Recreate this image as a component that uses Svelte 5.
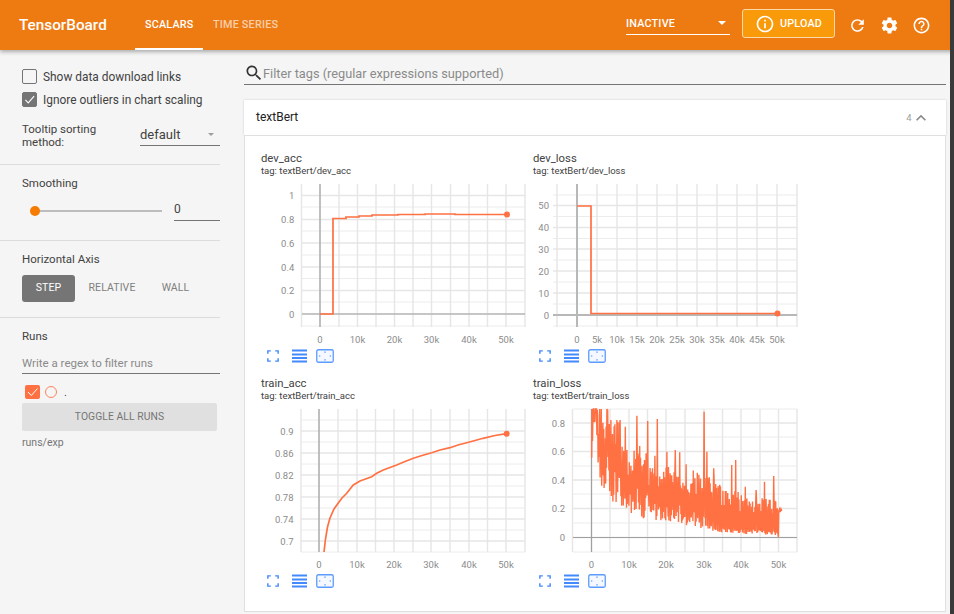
<script>
  function seeded(seed) {
    let s = seed;
    return () => {
      s = (s * 16807) % 2147483647;
      return (s - 1) / 2147483646;
    };
  }

  function interp(table, x) {
    for (let i = 1; i < table.length; i++) {
      if (x <= table[i][0]) {
        const [a, av] = table[i - 1];
        const [b, bv] = table[i];
        return av + ((bv - av) * (x - a)) / (b - a);
      }
    }
    return table[table.length - 1][1];
  }

  function trainLossPath() {
    const r = seeded(4242);
    const x0 = 66.7;
    const step5k = 18.65;
    const upper = [[0, 0.9], [1, 0.78], [2, 0.6], [4, 0.46], [6, 0.4], [7, 0.33], [8, 0.27], [10, 0.22]];
    const lower = [[0, 0.62], [0.5, 0.36], [1, 0.28], [2, 0.2], [4, 0.14], [6, 0.08], [7, 0.04], [10, 0.02]];
    const spikes = [[205, 100], [213, 100], [228, 100], [246, 105], [275, 135], [285, 135], [300, 155], [335, 122], [368, 138], [396, 132], [425, 230], [450, 225], [463, 232], [483, 268], [537, 110], [545, 230], [566, 280], [620, 270], [632, 255], [660, 335], [693, 345], [718, 320], [745, 303]]
      .map(([zx, zy]) => [zx / 3, zy / 3 - 34]);
    const pts = [];
    let next = 0;
    let high = true;
    for (let x = x0; x <= 253; x += 0.4) {
      const t = (x - x0) / step5k;
      const u = interp(upper, t);
      const l = interp(lower, t);
      let v;
      if (high) {
        v = u * (0.6 + 0.55 * r());
      } else {
        v = l * (0.75 + 1.15 * r());
      }
      high = !high;
      let y = 128.3 - v * 143;
      if (next < spikes.length && x >= spikes[next][0]) {
        y = spikes[next][1];
        next++;
      }
      pts.push([x, Math.max(0, Math.min(128.3, y))]);
    }
    pts.push([253.4, 128], [253.8, 102], [254.6, 100], [255.2, 103], [256, 100], [256.7, 102]);
    return 'M' + pts.map((p) => p[0].toFixed(1) + ',' + p[1].toFixed(1)).join('L');
  }

  const charts = [
    {
      name: 'dev_acc', cls: 'c1', dx: 0, labelRight: 44.3,
      yTicks: [[195.5,'1'],[219.5,'0.8'],[243,'0.6'],[267,'0.4'],[290.5,'0.2'],[314,'0']].map(([y,l]) => [y - 184, l]),
      ySub: [207,231,255,278.5,302,326].map((y) => y - 184),
      xTicks: [[70,'0'],[107.5,'10k'],[144.5,'20k'],[181.5,'30k'],[219,'40k'],[256,'50k']],
      xSub: [51.5,89,126,163,200.5,237.5,275],
      axisX: 70, axisY: 130,
      plotL: 52, plotR: 275,
      lines: 'M70,130H83V34.5H96V33H109V32H122V31H148V30.5H175V30H205V30.5H256',
      dot: [257, 30.5], h: 143
    },
    {
      name: 'dev_loss', cls: 'c2', dx: 3, labelRight: 24,
      yTicks: [[205.5,'50'],[227.5,'40'],[249,'30'],[271,'20'],[293,'10'],[315,'0']].map(([y,l]) => [y - 184, l]),
      ySub: [195,216.5,238.5,260,282,304,326].map((y) => y - 184),
      xTicks: [[52,'0'],[72,'5k'],[92,'10k'],[112,'15k'],[132,'20k'],[152,'25k'],[172,'30k'],[192,'35k'],[212,'40k'],[232,'45k'],[252,'50k']],
      xSub: [32, 272],
      axisX: 52, axisY: 131,
      plotL: 28, plotR: 272,
      lines: 'M52,22H66V129.500H252',
      dot: [252.5, 129.5], h: 143
    },
    {
      name: 'train_acc', cls: 'c3', dx: 0, labelRight: 43.5,
      yTicks: [[431,'0.9'],[453,'0.86'],[475,'0.82'],[497,'0.78'],[519,'0.74'],[541,'0.7']].map(([y,l]) => [y - 409, l]),
      ySub: [420,442,464,486,508,530,552].map((y) => y - 409),
      xTicks: [[69,'0'],[107,'10k'],[144,'20k'],[181,'30k'],[219,'40k'],[256,'50k']],
      xSub: [51,88,125.5,163,200,237.5,275],
      axisX: 69, axisY: -10,
      plotL: 51, plotR: 275,
      lines: 'M74,143L75.5,130L77.5,118L80,109L84,100L88.3,94L92,89L96.7,84.3L103.3,76L110,72L121.7,67.7L126.7,64.3L133.3,61L146.7,56L155,52.5L163.3,49.3L172,46.5L181.7,43.7L190,41L200,38.7L208,36L216.7,33.7L225,31.5L233,29.3L245,26.5L256.7,24.7',
      dot: [256.7, 24.7], h: 143
    },
    {
      name: 'train_loss', cls: 'c4', dx: 3, labelRight: 40,
      yTicks: [[423,'0.8'],[451.5,'0.6'],[480,'0.4'],[508.5,'0.2'],[537.5,'0']].map(([y,l]) => [y - 409, l]),
      ySub: [409,437,466,494,523,552].map((y) => y - 409),
      xTicks: [[66.5,'0'],[104,'10k'],[141,'20k'],[179,'30k'],[216,'40k'],[253.5,'50k']],
      xSub: [47.5,85,122.5,160,197.5,235,272],
      axisX: 66.5, axisY: 128.5,
      plotL: 48, plotR: 272,
      lines: trainLossPath(),
      dot: null, h: 143
    }
  ];
</script>

<div class="page">
  <header class="toolbar">
    <div class="brand">TensorBoard</div>
    <nav class="tabs">
      <div class="tab active">SCALARS</div>
      <div class="tab">TIME SERIES</div>
    </nav>
    <div class="spacer"></div>
    <div class="inactive">
      <span>INACTIVE</span>
      <i class="caret white"></i>
    </div>
    <button class="upload">
      <svg width="20" height="20" viewBox="0 0 24 24"><path fill="#fff" d="M11 17h2v-6h-2v6zm1-15C6.48 2 2 6.48 2 12s4.48 10 10 10 10-4.48 10-10S17.520 2 12 2zm0 18c-4.410 0-8-3.590-8-8s3.590-8 8-8 8 3.590 8 8-3.590 8-8 8zM11 9h2V7h-2v2z"/></svg>
      <span>UPLOAD</span>
    </button>
    <div class="actions">
      <svg width="19" height="19" viewBox="0 0 24 24"><path fill="#fff" d="M17.650 6.350C16.200 4.900 14.210 4 12 4c-4.420 0-7.990 3.580-7.990 8s3.570 8 7.990 8c3.730 0 6.840-2.550 7.730-6h-2.080c-.82 2.330-3.040 4-5.650 4-3.310 0-6-2.690-6-6s2.690-6 6-6c1.660 0 3.140.69 4.220 1.780L13 11h7V4l-2.350 2.350z"/></svg>
      <svg width="19" height="19" viewBox="0 0 24 24"><path fill="#fff" d="M19.430 12.980c.04-.32.07-.64.07-.98s-.03-.66-.07-.98l2.110-1.650c.19-.15.24-.42.12-.64l-2-3.460c-.12-.22-.39-.3-.61-.22l-2.490 1c-.52-.4-1.080-.73-1.690-.98l-.38-2.650C14.460 2.180 14.250 2 14 2h-4c-.25 0-.46.18-.49.420l-.38 2.650c-.61.25-1.170.59-1.690.98l-2.490-1c-.23-.09-.49 0-.61.22l-2 3.460c-.13.22-.07.49.12.64l2.110 1.650c-.04.32-.07.65-.07.98s.03.66.07.98l-2.110 1.650c-.19.15-.24.42-.12.64l2 3.460c.12.22.39.3.61.22l2.490-1c.52.4 1.080.73 1.690.98l.38 2.650c.03.24.24.42.49.42h4c.25 0 .46-.18.49-.42l.38-2.650c.61-.25 1.170-.59 1.690-.98l2.490 1c.23.09.49 0 .61-.22l2-3.460c.12-.22.07-.49-.12-.64l-2.110-1.650zM12 15.500c-1.930 0-3.500-1.570-3.500-3.500s1.570-3.500 3.500-3.500 3.500 1.570 3.500 3.500-1.570 3.500-3.500 3.500z"/></svg>
      <svg width="19" height="19" viewBox="0 0 24 24"><path fill="#fff" d="M11 18h2v-2h-2v2zm1-16C6.480 2 2 6.480 2 12s4.480 10 10 10 10-4.480 10-10S17.520 2 12 2zm0 18c-4.410 0-8-3.590-8-8s3.590-8 8-8 8 3.590 8 8-3.590 8-8 8zm0-14c-2.210 0-4 1.790-4 4h2c0-1.100.9-2 2-2s2 .9 2 2c0 2-3 1.750-3 5h2c0-2.250 3-2.500 3-5 0-2.210-1.790-4-4-4z"/></svg>
    </div>
  </header>

  <div class="body">
    <aside class="side">
      <section class="opts">
        <label class="check"><span class="box"></span>Show data download links</label>
        <label class="check"><span class="box on"><svg width="15" height="15" viewBox="0 0 18 18"><path d="M4 9.500L7.500 13L14.500 5" fill="none" stroke="#fff" stroke-width="1.300"/></svg></span>Ignore outliers in chart scaling</label>
        <div class="sort">
          <div class="sort-label">Tooltip sorting method:</div>
          <div class="sort-select"><span>default</span><i class="caret grey"></i></div>
        </div>
      </section>
      <section class="smooth">
        <div class="title">Smoothing</div>
        <div class="slider-row">
          <div class="track"><span class="knob"></span></div>
          <div class="num">0</div>
        </div>
      </section>
      <section class="axis">
        <div class="title">Horizontal Axis</div>
        <div class="seg">
          <div class="seg-btn sel">STEP</div>
          <div class="seg-btn rel">RELATIVE</div>
          <div class="seg-btn wall">WALL</div>
        </div>
      </section>
      <section class="runs">
        <div class="title">Runs</div>
        <div class="filter">Write a regex to filter runs</div>
        <div class="run">
          <span class="run-box"><svg width="15" height="14" viewBox="0 0 15 14"><path d="M3 7L6.300 10.500L12.500 3.500" fill="none" stroke="#fff" stroke-width="1"/></svg></span>
          <span class="run-dot"></span>
          <span class="run-name">.</span>
        </div>
        <div class="toggle">TOGGLE ALL RUNS</div>
        <div class="runpath">runs/exp</div>
      </section>
    </aside>

    <main class="main">
      <div class="search">
        <svg width="20" height="20" viewBox="0 0 24 24"><path fill="#333" d="M15.500 14h-.79l-.28-.27C15.410 12.590 16 11.110 16 9.500 16 5.910 13.090 3 9.500 3S3 5.910 3 9.500 5.910 16 9.500 16c1.610 0 3.090-.59 4.230-1.570l.27.28v.79l5 4.990L20.490 19l-4.990-5zm-6 0C7.010 14 5 11.990 5 9.500S7.010 5 9.500 5 14 7.010 14 9.500 11.990 14 9.500 14z"/></svg>
        <span>Filter tags (regular expressions supported)</span>
      </div>

      <div class="pane-head">
        <span class="pane-name">textBert</span>
        <span class="count">4</span>
        <svg class="chev" width="20" height="20" viewBox="0 0 24 24"><path fill="#8a8a8a" d="M7.410 15.410L12 10.830l4.590 4.580L18 14l-6-6-6 6z"/></svg>
      </div>

      <div class="pane">
        <div class="grid">
          {#each charts as c}
            <article class="card {c.cls}">
              <div class="name">{c.name}</div>
              <div class="tag">tag: textBert/{c.name}</div>
              <svg class="plot" width="280" height="163" viewBox="0 0 280 163">
                <g transform="translate({c.dx} 0)">
                  {#each c.ySub as y}<line x1={c.plotL} x2={c.plotR} y1={y} y2={y} class="gs" />{/each}
                  {#each c.yTicks as t}<line x1={c.plotL} x2={c.plotR} y1={t[0]} y2={t[0]} class="g" />{/each}
                  {#each c.xSub as x}<line x1={x} x2={x} y1="0" y2={c.h} class="g" />{/each}
                  {#each c.xTicks as t}<line x1={t[0]} x2={t[0]} y1="0" y2={c.h} class="g" />{/each}
                  {#if c.axisY > 0}<line x1={c.plotL} x2={c.plotR} y1={c.axisY} y2={c.axisY} class="axisline" />{/if}
                  <line x1={c.axisX} x2={c.axisX} y1="0" y2={c.h} class="axisline" />
                  <path d={c.lines} class="series" class:thin={c.cls === 'c4'} />
                  {#if c.dot}<circle cx={c.dot[0]} cy={c.dot[1]} r="3" fill="#ff7043" />{/if}
                  {#each c.yTicks as t}<text x={c.labelRight} y={t[0] + 3.5} text-anchor="end" class="lbl">{t[1]}</text>{/each}
                  {#each c.xTicks as t}<text x={t[0]} y="158.500" text-anchor="middle" class="lbl">{t[1]}</text>{/each}
                </g>
              </svg>
              <div class="tools">
                <svg width="14" height="14" viewBox="0 0 14 14" class="t1"><path d="M1 4.500V1H4.500M9.500 1H13V4.500M13 9.500V13H9.500M4.500 13H1V9.500" fill="none" stroke="#448aff" stroke-width="1.700"/></svg>
                <svg width="16" height="14" viewBox="0 0 16 14" class="t2"><path d="M0 1.500H15M0 5.500H15M0 9H15M0 12.500H15" fill="none" stroke="#448aff" stroke-width="1.800"/></svg>
                <svg width="18" height="14" viewBox="0 0 18 14" class="t3"><rect x="0.750" y="0.750" width="16.500" height="12.500" rx="1.500" fill="#f5f9ff" stroke="#5c9bff" stroke-width="1.300"/><path d="M9 2.500V3.800M9 10.200V11.500M3 7H4.300M13.700 7H15" stroke="#448aff" stroke-width="1.200"/></svg>
              </div>
            </article>
          {/each}
        </div>
      </div>
    </main>
  </div>
  <div class="edge"></div>
</div>

<style>
  :global(body) {
    margin: 0;
    background: #f5f5f5;
    overflow: hidden;
  }
  .page {
    width: 954px;
    height: 614px;
    overflow: hidden;
    position: relative;
    font-family: Roboto, "Liberation Sans", sans-serif;
    color: #424242;
    display: flex;
    flex-direction: column;
  }
  .edge {
    position: absolute;
    right: 0;
    top: 0;
    width: 4px;
    height: 614px;
    background: #3a3a3a;
    z-index: 3;
  }
  .toolbar {
    height: 50px;
    flex: none;
    background: #ee7a12;
    box-shadow: 0 2px 4px rgba(0, 0, 0, 0.3);
    display: flex;
    align-items: center;
    color: #fff;
    position: relative;
    z-index: 2;
  }
  .brand {
    font-size: 15.300px;
    font-weight: 500;
    margin-left: 19px;
    width: 116px;
  }
  .tabs {
    display: flex;
    height: 50px;
  }
  .tab {
    font-size: 10.800px;
    font-weight: 500;
    letter-spacing: 0.2px;
    line-height: 49px;
    padding: 0 10px;
    color: rgba(255, 255, 255, 0.65);
  }
  .tab.active {
    color: #fff;
    width: 48px;
    border-bottom: 2px solid #fff;
    height: 48px;
  }
  .spacer {
    flex: 1;
  }
  .inactive {
    width: 104px;
    height: 34px;
    box-sizing: border-box;
    border-bottom: 1px solid #fff;
    font-size: 10.800px;
    font-weight: 500;
    letter-spacing: 0.2px;
    display: flex;
    justify-content: space-between;
    align-items: center;
    padding: 11px 4px 0 0;
    margin: 0 12px 15px 0;
    align-self: flex-end;
  }
  .caret {
    display: block;
    width: 0;
    height: 0;
    border-left: 4.500px solid transparent;
    border-right: 4.500px solid transparent;
    border-top: 4.500px solid #fff;
  }
  .caret.grey {
    border-left-width: 3.500px;
    border-right-width: 3.500px;
    border-top: 3.500px solid #9e9e9e;
  }
  .upload {
    width: 93px;
    height: 29px;
    box-sizing: border-box;
    background: #f99a0a;
    border: 1px solid #fbd9a8;
    border-radius: 3px;
    color: #fff;
    font: 500 10.800px Roboto, sans-serif;
    letter-spacing: 0.2px;
    display: flex;
    align-items: center;
    justify-content: center;
    padding: 0;
    gap: 5px;
    margin-bottom: 3px;
  }
  .actions {
    display: flex;
    width: 119px;
    padding-left: 12.500px;
    box-sizing: border-box;
    gap: 13px;
  }
  .actions svg {
    flex: none;
  }
  .body {
    flex: 1;
    display: flex;
    min-height: 0;
  }
  .side {
    width: 220px;
    flex: none;
    font-size: 12px;
  }
  .side section {
    border-bottom: 1px solid #dcdcdc;
    padding-left: 22px;
    box-sizing: border-box;
  }
  .side section:last-child {
    border-bottom: none;
  }
  .opts {
    height: 115px;
    padding-top: 15px;
  }
  .check {
    display: flex;
    align-items: center;
    height: 23px;
    font-size: 11.900px;
    color: #424242;
  }
  .box {
    width: 13px;
    height: 13px;
    border: 1px solid #757575;
    border-radius: 2px;
    margin-right: 6px;
    flex: none;
  }
  .box.on {
    background: #757575;
    display: flex;
    align-items: center;
    justify-content: center;
  }
  .box.on svg {
    flex: none;
    margin: -1px;
  }
  .sort {
    display: flex;
    margin-top: 8px;
    font-size: 11.500px;
    line-height: 13px;
  }
  .sort-label {
    width: 118px;
    padding-top: 4px;
  }
  .sort-select {
    width: 80px;
    height: 26px;
    box-sizing: border-box;
    border-bottom: 1px solid #757575;
    font-size: 13px;
    line-height: 23px;
    display: flex;
    justify-content: space-between;
    align-items: center;
    padding: 3px 6px 0 0;
    margin-top: 1px;
  }
  .smooth {
    height: 76px;
    padding-top: 11px;
  }
  .title {
    font-size: 11.500px;
    line-height: 14px;
    color: #424242;
  }
  .slider-row {
    display: flex;
    align-items: flex-end;
    margin-top: 10px;
  }
  .track {
    width: 127px;
    height: 2px;
    background: #bdbdbd;
    margin-left: 13px;
    position: relative;
    margin-bottom: 9px;
  }
  .knob {
    position: absolute;
    left: -5px;
    top: -4px;
    width: 10px;
    height: 10px;
    border-radius: 50%;
    background: #f57c00;
  }
  .num {
    width: 46px;
    height: 21px;
    box-sizing: border-box;
    border-bottom: 1px solid #757575;
    margin-left: 12px;
    font-size: 12px;
    line-height: 19px;
  }
  .axis {
    height: 77px;
    padding-top: 11px;
  }
  .seg {
    display: flex;
    margin-top: 9px;
    font-size: 10.500px;
  }
  .seg-btn {
    height: 26px;
    line-height: 26px;
    text-align: center;
    color: #808080;
    letter-spacing: 0.1px;
  }
  .seg-btn.sel {
    width: 53px;
    height: 27px;
    background: #757575;
    color: #fff;
    border-radius: 3px;
  }
  .seg-btn.rel {
    width: 74px;
  }
  .seg-btn.wall {
    width: 53px;
  }
  .runs {
    padding-top: 11px;
  }
  .filter {
    width: 198px;
    height: 24px;
    box-sizing: border-box;
    border-bottom: 1px solid #757575;
    margin-top: 7px;
    font-size: 11.500px;
    line-height: 26px;
    color: #8a8a8a;
  }
  .run {
    display: flex;
    align-items: center;
    margin-top: 11px;
    height: 14px;
    padding-left: 3px;
  }
  .run-box {
    width: 15px;
    height: 14px;
    background: #ff7043;
    border-radius: 2px;
    display: block;
    flex: none;
  }
  .run-box svg {
    display: block;
  }
  .run-dot {
    width: 10px;
    height: 10px;
    border: 1.500px solid #ff7043;
    border-radius: 50%;
    margin-left: 5px;
    flex: none;
    opacity: 0.85;
  }
  .run-name {
    margin-left: 7px;
    font-size: 11px;
  }
  .toggle {
    width: 195px;
    height: 28px;
    margin-top: 4px;
    background: #e0e0e0;
    border-radius: 2px;
    text-align: center;
    line-height: 28px;
    font-size: 10.300px;
    color: #757575;
    letter-spacing: 0.1px;
  }
  .runpath {
    font-size: 10.500px;
    color: #757575;
    margin-top: 4px;
    line-height: 16px;
  }
  .main {
    flex: 1;
    min-width: 0;
    padding-left: 24px;
  }
  .search {
    height: 35px;
    width: 702px;
    box-sizing: border-box;
    border-bottom: 1px solid #757575;
    display: flex;
    align-items: flex-end;
    padding-bottom: 1px;
    font-size: 12.750px;
    color: #8a8a8a;
    line-height: 19px;
  }
  .search svg {
    flex: none;
    margin-right: -1px;
  }
  .pane-head {
    margin-top: 15px;
    height: 35px;
    width: 702px;
    background: #fff;
    display: flex;
    align-items: center;
    box-shadow: 0 0 2px rgba(0, 0, 0, 0.18);
    box-sizing: border-box;
    padding: 0 15.500px 0 12px;
  }
  .pane-name {
    font-size: 12px;
    color: #212121;
    flex: 1;
    margin-top: -1px;
  }
  .count {
    font-size: 9.500px;
    color: #9e9e9e;
    margin-right: -1px;
  }
  .pane {
    width: 702px;
    height: 477px;
    box-sizing: border-box;
    background: #fff;
    border: 1px solid #e0e0e0;
    padding-top: 16px;
  }
  .grid {
    display: grid;
    grid-template-columns: 272px 280px;
    grid-auto-rows: 225px;
  }
  .card {
    padding-left: 16px;
  }
  .name {
    font-size: 11.300px;
    line-height: 14px;
    color: #424242;
  }
  .tag {
    font-size: 9.500px;
    line-height: 12px;
    color: #424242;
    margin-top: -1px;
  }
  .plot {
    display: block;
    margin-left: -11px;
    margin-top: 7px;
    overflow: visible;
  }
  .g {
    stroke: #e6e6e6;
    stroke-width: 1.400;
  }
  .gs {
    stroke: #ececec;
    stroke-width: 1;
  }
  .axisline {
    stroke: #a0a0a0;
    stroke-width: 1.200;
  }
  .c2 .axisline {
    stroke: #b8b8b8;
    stroke-width: 2;
  }
  .series {
    fill: none;
    stroke: #ff7043;
    stroke-width: 1.700;
  }
  .series.thin {
    stroke-width: 1.400;
  }
  .lbl {
    font-size: 9.500px;
    fill: #8c8c8c;
    font-family: Roboto, sans-serif;
  }
  .tools {
    display: flex;
    align-items: center;
    margin-top: 2px;
    margin-left: 6px;
  }
  .t1 {
    margin-right: 13px;
    width: 12px;
    height: 12px;
  }
  .t2 {
    margin-right: 8px;
  }
</style>
